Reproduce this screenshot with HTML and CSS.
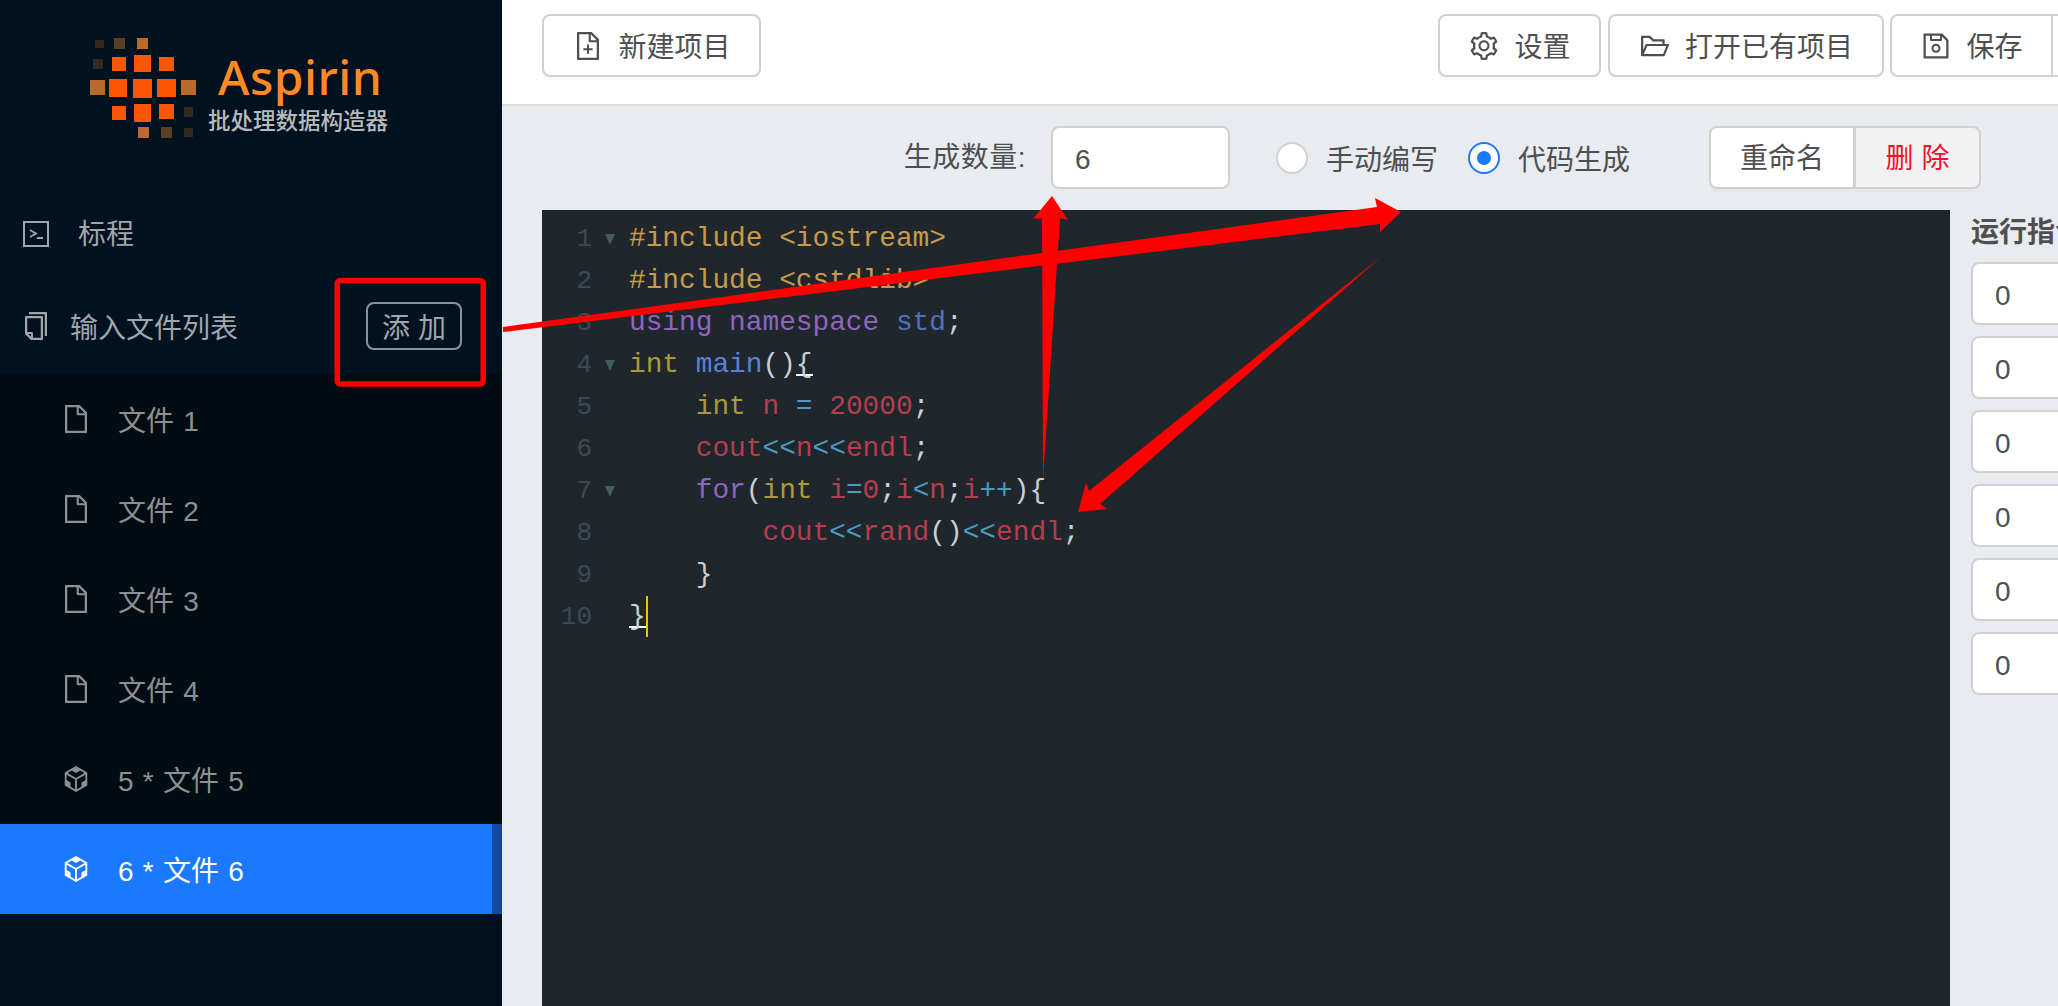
FILE: index.html
```html
<!DOCTYPE html>
<html lang="zh">
<head>
<meta charset="utf-8">
<title>Aspirin</title>
<link rel="stylesheet" href="styles.css">
</head>
<body>
<div class="app">
  <aside class="sidebar">
    <div class="logo">
      <svg class="logo-art" width="502" height="192" viewBox="0 0 502 192">
        <g class="sq-dark"><rect x="95" y="40" width="9" height="8"/><rect x="93" y="59" width="10" height="10"/><rect x="184" y="107" width="9" height="10"/><rect x="184" y="128" width="9" height="9"/></g>
        <g class="sq-mid"><rect x="114" y="38" width="11" height="11"/><rect x="161" y="127" width="11" height="11"/></g>
        <g class="sq-soft"><rect x="137" y="38" width="11" height="11"/><rect x="90" y="80" width="15" height="15"/><rect x="181" y="80" width="15" height="15"/><rect x="138" y="127" width="11" height="11"/></g>
        <g class="sq-hot"><rect x="112" y="57" width="14" height="14"/><rect x="134" y="55" width="17" height="17"/><rect x="159" y="57" width="15" height="14"/><rect x="109" y="79" width="18" height="18"/><rect x="133" y="79" width="19" height="19"/><rect x="157" y="79" width="19" height="18"/><rect x="112" y="106" width="14" height="14"/><rect x="134" y="104" width="17" height="18"/><rect x="159" y="104" width="15" height="15"/></g>
        <text class="logo-name" x="218" y="95">Aspirin</text>
        <text class="logo-sub" x="208" y="129">批处理数据构造器</text>
      </svg>
    </div>
    <nav class="menu">
      <div class="menu-item">
        <svg class="ico ico-term" viewBox="0 0 26 26"><rect x="1" y="1" width="24" height="24" fill="none" stroke="currentColor" stroke-width="2"/><path d="M7 9l6 3.5-6 3.5M14 17h6" fill="none" stroke="currentColor" stroke-width="1.8"/></svg>
        <span class="lift">标程</span>
      </div>
      <div class="menu-item menu-title">
        <svg class="ico ico-copy" viewBox="0 0 1024 1024"><path fill="currentColor" d="M832 64H296c-4.4 0-8 3.6-8 8v56c0 4.4 3.6 8 8 8h496v688c0 4.4 3.6 8 8 8h56c4.4 0 8-3.6 8-8V96c0-17.7-14.3-32-32-32zM704 192H192c-17.7 0-32 14.3-32 32v530.7c0 8.5 3.4 16.6 9.4 22.6l173.3 173.3c2.2 2.2 4.7 4 7.4 5.5v1.9h4.2c3.5 1.3 7.2 2 11 2H704c17.7 0 32-14.3 32-32V224c0-17.7-14.3-32-32-32zM350 856.2L263.9 770H350v86.2zM664 888H414V746c0-22.1-17.9-40-40-40H232V264h432v624z"/></svg>
        <span>输入文件列表</span>
        <button class="add-btn">添 加</button>
      </div>
      <div class="submenu">
        <div class="sub-item"><svg class="ico" viewBox="0 0 1024 1024"><path fill="currentColor" d="M854.6 288.6L639.4 73.4c-6-6-14.1-9.4-22.6-9.4H192c-17.7 0-32 14.3-32 32v832c0 17.7 14.3 32 32 32h640c17.7 0 32-14.3 32-32V311.3c0-8.5-3.4-16.7-9.4-22.7zM790.2 326H602V137.8L790.2 326zm1.8 562H232V136h302v216a42 42 0 0 0 42 42h216v494z"/></svg><span>文件 1</span></div>
        <div class="sub-item"><svg class="ico" viewBox="0 0 1024 1024"><path fill="currentColor" d="M854.6 288.6L639.4 73.4c-6-6-14.1-9.4-22.6-9.4H192c-17.7 0-32 14.3-32 32v832c0 17.7 14.3 32 32 32h640c17.7 0 32-14.3 32-32V311.3c0-8.5-3.4-16.7-9.4-22.7zM790.2 326H602V137.8L790.2 326zm1.8 562H232V136h302v216a42 42 0 0 0 42 42h216v494z"/></svg><span>文件 2</span></div>
        <div class="sub-item"><svg class="ico" viewBox="0 0 1024 1024"><path fill="currentColor" d="M854.6 288.6L639.4 73.4c-6-6-14.1-9.4-22.6-9.4H192c-17.7 0-32 14.3-32 32v832c0 17.7 14.3 32 32 32h640c17.7 0 32-14.3 32-32V311.3c0-8.5-3.4-16.7-9.4-22.7zM790.2 326H602V137.8L790.2 326zm1.8 562H232V136h302v216a42 42 0 0 0 42 42h216v494z"/></svg><span>文件 3</span></div>
        <div class="sub-item"><svg class="ico" viewBox="0 0 1024 1024"><path fill="currentColor" d="M854.6 288.6L639.4 73.4c-6-6-14.1-9.4-22.6-9.4H192c-17.7 0-32 14.3-32 32v832c0 17.7 14.3 32 32 32h640c17.7 0 32-14.3 32-32V311.3c0-8.5-3.4-16.7-9.4-22.7zM790.2 326H602V137.8L790.2 326zm1.8 562H232V136h302v216a42 42 0 0 0 42 42h216v494z"/></svg><span>文件 4</span></div>
        <div class="sub-item"><svg class="ico" viewBox="0 0 1024 1024"><path fill="currentColor" d="M709.6 210l.4-.2h.2L512 96 313.9 209.8h-.2l.7.3L151.5 304v416L512 928l360.5-208V304l-162.9-94zM482.7 843.6L339.6 761V621.4L210 547.8V372.9l272.7 157.3v313.4zM238.2 321.5l134.7-77.8 138.9 79.7 139.1-79.9 135.2 78-273.9 158-274-158zM814 548.3l-128.8 73.1v139.1l-143.9 83V530.4L814 373.1v175.2z"/></svg><span>5 * 文件 5</span></div>
        <div class="sub-item active"><svg class="ico" viewBox="0 0 1024 1024"><path fill="currentColor" d="M709.6 210l.4-.2h.2L512 96 313.9 209.8h-.2l.7.3L151.5 304v416L512 928l360.5-208V304l-162.9-94zM482.7 843.6L339.6 761V621.4L210 547.8V372.9l272.7 157.3v313.4zM238.2 321.5l134.7-77.8 138.9 79.7 139.1-79.9 135.2 78-273.9 158-274-158zM814 548.3l-128.8 73.1v139.1l-143.9 83V530.4L814 373.1v175.2z"/></svg><span>6 * 文件 6</span></div>
      </div>
    </nav>
  </aside>

  <main class="main">
    <header class="toolbar">
      <button class="btn btn-new"><svg class="btn-ico" viewBox="0 0 1024 1024"><path fill="currentColor" d="M854.6 288.6L639.4 73.4c-6-6-14.1-9.4-22.6-9.4H192c-17.7 0-32 14.3-32 32v832c0 17.7 14.3 32 32 32h640c17.7 0 32-14.3 32-32V311.3c0-8.5-3.4-16.7-9.4-22.7zM790.2 326H602V137.8L790.2 326zm1.8 562H232V136h302v216a42 42 0 0 0 42 42h216v494z"/><path fill="currentColor" d="M544 472c0-4.4-3.6-8-8-8h-48c-4.4 0-8 3.6-8 8v108H372c-4.4 0-8 3.6-8 8v48c0 4.4 3.6 8 8 8h108v108c0 4.4 3.6 8 8 8h48c4.4 0 8-3.6 8-8V644h108c4.4 0 8-3.6 8-8v-48c0-4.4-3.6-8-8-8H544V472z"/></svg><span class="lift-sm">新建项目</span></button>
      <div class="toolbar-right">
        <button class="btn btn-set"><svg class="btn-ico" viewBox="0 0 1024 1024"><path fill="currentColor" d="M924.8 625.7l-65.5-56c3.1-19 4.7-38.4 4.7-57.8s-1.6-38.8-4.7-57.8l65.5-56a32.03 32.03 0 0 0 9.3-35.2l-.9-2.6a443.74 443.74 0 0 0-79.7-137.9l-1.8-2.1a32.12 32.12 0 0 0-35.1-9.5l-81.3 28.9c-30-24.6-63.5-44-99.7-57.6l-15.7-85a32.05 32.05 0 0 0-25.8-25.7l-2.7-.5c-52.1-9.4-106.9-9.4-159 0l-2.7.5a32.05 32.05 0 0 0-25.8 25.7l-15.8 85.4a351.86 351.86 0 0 0-99 57.4l-81.9-29.1a32 32 0 0 0-35.1 9.5l-1.8 2.1a446.02 446.02 0 0 0-79.7 137.9l-.9 2.6c-4.5 12.5-.8 26.5 9.3 35.2l66.3 56.6c-3.1 18.8-4.6 38-4.6 57.1 0 19.2 1.5 38.4 4.6 57.1L99 625.5a32.03 32.03 0 0 0-9.3 35.2l.9 2.6c18.1 50.4 44.9 96.9 79.7 137.9l1.8 2.1a32.12 32.12 0 0 0 35.1 9.5l81.9-29.1c29.8 24.5 63.1 43.9 99 57.4l15.8 85.4a32.05 32.05 0 0 0 25.8 25.7l2.7.5a449.4 449.4 0 0 0 159 0l2.7-.5a32.05 32.05 0 0 0 25.8-25.7l15.7-85a350 350 0 0 0 99.7-57.6l81.3 28.9a32 32 0 0 0 35.1-9.5l1.8-2.1c34.8-41.1 61.6-87.5 79.7-137.9l.9-2.6c4.5-12.3.8-26.3-9.3-35zM788.3 465.9c2.5 15.1 3.8 30.6 3.8 46.1s-1.3 31-3.8 46.1l-6.6 40.1 74.7 63.9a370.03 370.03 0 0 1-42.6 73.6L721 702.8l-31.4 25.8c-23.9 19.6-50.5 35-79.3 45.8l-38.1 14.3-17.9 97a377.5 377.5 0 0 1-85 0l-17.9-97.2-37.8-14.5c-28.5-10.8-55-26.2-78.7-45.7l-31.4-25.9-93.4 33.2c-17-22.9-31.2-47.6-42.6-73.6l75.5-64.5-6.5-40c-2.4-14.9-3.7-30.3-3.7-45.5 0-15.3 1.2-30.6 3.7-45.5l6.5-40-75.5-64.5c11.3-26.1 25.6-50.7 42.6-73.6l93.4 33.2 31.4-25.9c23.7-19.5 50.2-34.9 78.7-45.7l37.9-14.3 17.9-97.2c28.1-3.2 56.8-3.2 85 0l17.9 97 38.1 14.3c28.7 10.8 55.4 26.2 79.3 45.8l31.4 25.8 92.8-32.9c17 22.9 31.2 47.6 42.6 73.6L781.8 426l6.5 39.9zM512 326c-97.2 0-176 78.8-176 176s78.8 176 176 176 176-78.8 176-176-78.8-176-176-176zm79.2 255.2A111.6 111.6 0 0 1 512 614c-29.9 0-58-11.7-79.2-32.8A111.6 111.6 0 0 1 400 502c0-29.9 11.7-58 32.8-79.2C454 401.6 482.1 390 512 390c29.9 0 58 11.6 79.2 32.8A111.6 111.6 0 0 1 624 502c0 29.9-11.7 58-32.8 79.2z"/></svg><span class="lift-sm">设置</span></button>
        <button class="btn btn-open"><svg class="btn-ico" viewBox="0 0 1024 1024"><path fill="currentColor" d="M928 444H820V330.4c0-17.7-14.3-32-32-32H473L355.7 186.2a8.15 8.15 0 0 0-5.5-2.2H96c-17.7 0-32 14.3-32 32v592c0 17.7 14.3 32 32 32h698c13 0 24.8-7.9 29.7-20l134-332c1.5-3.8 2.3-7.9 2.3-12 0-17.7-14.3-32-32-32zM136 256h188.5l119.6 114.4H748V444H238c-13 0-24.8 7.9-29.7 20L136 643.2V256zm635.3 512H159l103.3-256h612.4L771.3 768z"/></svg><span class="lift-sm">打开已有项目</span></button>
        <div class="btn-group">
          <button class="btn btn-save"><svg class="btn-ico" viewBox="0 0 1024 1024"><path fill="currentColor" d="M893.3 293.3L730.7 130.7c-7.5-7.5-16.7-13-26.7-16V112H144c-17.7 0-32 14.3-32 32v736c0 17.7 14.3 32 32 32h736c17.7 0 32-14.3 32-32V338.5c0-17-6.7-33.2-18.7-45.2zM384 184h256v104H384V184zm456 656H184V184h136v136c0 17.7 14.3 32 32 32h320c17.7 0 32-14.3 32-32V205.8l136 136V840zM512 442c-79.5 0-144 64.5-144 144s64.5 144 144 144 144-64.5 144-144-64.5-144-144-144zm0 224c-44.2 0-80-35.8-80-80s35.8-80 80-80 80 35.8 80 80-35.8 80-80 80z"/></svg><span class="lift-sm">保存</span></button>
          <div class="btn-cut"></div>
        </div>
      </div>
    </header>

    <section class="options">
      <label class="count-label">生成数量:</label>
      <div class="field field-count">6</div>
      <div class="radios">
        <span class="radio"><i class="radio-dot"></i>手动编写</span>
        <span class="radio checked"><i class="radio-dot"></i>代码生成</span>
      </div>
      <div class="seg">
        <button class="seg-btn">重命名</button>
        <button class="seg-btn seg-del">删 除</button>
      </div>
    </section>

    <section class="work">
      <div class="editor">
        <div class="line"><span class="ln">1</span><span class="fold on"></span><code><span class="inc">#include &lt;iostream&gt;</span></code></div>
        <div class="line"><span class="ln">2</span><span class="fold"></span><code><span class="inc">#include &lt;cstdlib&gt;</span></code></div>
        <div class="line"><span class="ln">3</span><span class="fold"></span><code><span class="kw">using namespace</span> <span class="ns">std</span><span class="pn">;</span></code></div>
        <div class="line"><span class="ln">4</span><span class="fold on"></span><code><span class="ty">int</span> <span class="fn">main</span><span class="pn">()</span><span class="pn match">{</span></code></div>
        <div class="line"><span class="ln">5</span><span class="fold"></span><code>    <span class="ty">int</span> <span class="id">n</span> <span class="op">=</span> <span class="id">20000</span><span class="pn">;</span></code></div>
        <div class="line"><span class="ln">6</span><span class="fold"></span><code>    <span class="id">cout</span><span class="op">&lt;&lt;</span><span class="id">n</span><span class="op">&lt;&lt;</span><span class="id">endl</span><span class="pn">;</span></code></div>
        <div class="line"><span class="ln">7</span><span class="fold on"></span><code>    <span class="kw">for</span><span class="pn">(</span><span class="ty">int</span> <span class="id">i</span><span class="op">=</span><span class="id">0</span><span class="pn">;</span><span class="id">i</span><span class="op">&lt;</span><span class="id">n</span><span class="pn">;</span><span class="id">i</span><span class="op">++</span><span class="pn">){</span></code></div>
        <div class="line"><span class="ln">8</span><span class="fold"></span><code>        <span class="id">cout</span><span class="op">&lt;&lt;</span><span class="id">rand</span><span class="pn">()</span><span class="op">&lt;&lt;</span><span class="id">endl</span><span class="pn">;</span></code></div>
        <div class="line"><span class="ln">9</span><span class="fold"></span><code>    <span class="pn">}</span></code></div>
        <div class="line"><span class="ln">10</span><span class="fold"></span><code><span class="pn match caret">}</span></code></div>
      </div>
      <aside class="cmds">
        <div class="cmds-title">运行指令</div>
        <div class="field">0</div>
        <div class="field">0</div>
        <div class="field">0</div>
        <div class="field">0</div>
        <div class="field">0</div>
        <div class="field">0</div>
      </aside>
    </section>
  </main>
</div>

<svg class="annot" width="2058" height="1006" viewBox="0 0 2058 1006">
  <rect class="annot-box" x="337.2" y="280.5" width="146" height="103.5" rx="3"/>
  <polygon class="annot-arrow" points="503,327 1377,207 1375,198 1401,212 1380,232 1380,224 503,332"/>
  <polygon class="annot-arrow" points="1043,480 1042,218 1033,219 1052,196 1068,220 1060,218"/>
  <polygon class="annot-arrow" points="1382,256 1100,504 1107,509 1078,512 1086,483 1089,491"/>
</svg>
</body>
</html>
```
FILE: styles.css
```css
* { box-sizing: border-box; }
html, body { margin: 0; height: 100%; overflow: hidden; }
body {
  font-family: "Liberation Sans", "Noto Sans CJK SC", sans-serif;
  font-size: 28px;
  color: #4f4f4f;
  background: #e8ebf0;
}
.app { display: flex; width: 2058px; height: 1006px; overflow: hidden; }
.lift { padding-bottom: 4px; }
.lift-sm { padding-bottom: 2px; }

/* sidebar */
.sidebar { flex: none; width: 502px; background: #00111f; color: #a0a6ac; }
.logo { height: 192px; }
.logo-art { display: block; }
.sq-dark { fill: #33291f; }
.sq-mid { fill: #5a4126; }
.sq-soft { fill: #b96a2c; }
.sq-hot { fill: #ff5500; }
.logo-name { font-family: "Noto Sans", sans-serif; font-size: 48px; font-weight: 500; fill: #ff8a25; letter-spacing: 0.5px; }
.logo-sub { font-family: "Noto Sans CJK SC", sans-serif; font-size: 22.5px; font-weight: 500; fill: #b6babd; }

.menu-item { display: flex; align-items: center; height: 84px; padding-left: 23px; gap: 29px; }
.menu-title { margin-top: 8px; margin-bottom: 6px; padding-left: 20px; gap: 18px; }
.ico { flex: none; width: 32px; height: 32px; }
.ico-term { width: 26px; height: 26px; }
.add-btn {
  margin-left: auto;
  margin-right: 40px;
  width: 96px;
  height: 48px;
  padding: 0;
  font: inherit;
  color: #a0a6ac;
  background: transparent;
  border: 2px solid #8a9299;
  border-radius: 8px;
}
.submenu { background: #020c12; }
.sub-item { display: flex; align-items: center; height: 90px; padding-left: 60px; gap: 26px; color: #8b9094; word-spacing: 1.5px; }
.sub-item.active { background: #1a79ff; color: #fff; border-right: 10px solid #14489e; }

/* main */
.main { flex: none; width: 1556px; display: flex; flex-direction: column; }
.toolbar {
  flex: none;
  height: 106px;
  padding: 14px 0 0 40px;
  background: #fff;
  border-bottom: 2px solid #dcdee1;
  display: flex;
  justify-content: space-between;
  align-items: flex-start;
}
.toolbar-right { display: flex; gap: 6px; }
.btn-group { display: flex; }
.btn {
  display: flex;
  align-items: center;
  justify-content: center;
  height: 63px;
  padding: 0;
  font: inherit;
  color: #4f4f4f;
  background: #fff;
  border: 2px solid #d0d0d0;
  border-radius: 8px;
  box-shadow: 0 3px 0 rgba(0, 0, 0, .02);
  gap: 14px;
}
.btn-ico { width: 32px; height: 32px; flex: none; }
.btn-new { width: 219px; }
.btn-set { width: 163px; margin-right: 1px; }
.btn-open { width: 276px; }
.btn-save { width: 163px; border-radius: 8px 0 0 8px; }
.btn-cut { width: 5px; height: 63px; background: #fff; border: 2px solid #d0d0d0; border-width: 2px 0; }

.options {
  flex: none;
  height: 104px;
  padding: 20px 77px 0 0;
  display: flex;
  justify-content: flex-end;
  align-items: flex-start;
}
.count-label { line-height: 64px; margin-right: 25px; letter-spacing: .5px; }
.field {
  height: 63px;
  line-height: 64px;
  padding-left: 22px;
  background: #fff;
  border: 2px solid #d0d0d0;
  border-radius: 8px;
}
.field-count { width: 179px; }
.radios { display: flex; gap: 30px; margin-left: 46px; height: 63px; }
.radio { display: flex; align-items: center; gap: 18px; padding-top: 1px; }
.radio-dot {
  width: 32px;
  height: 32px;
  flex: none;
  background: #fff;
  border: 2px solid #d0d0d0;
  border-radius: 50%;
  display: flex;
  align-items: center;
  justify-content: center;
}
.checked .radio-dot { border-color: #1a79ff; }
.checked .radio-dot::after { content: ""; width: 14px; height: 14px; border-radius: 50%; background: #1a79ff; }
.seg { display: flex; margin-left: 79px; }
.seg-btn {
  height: 63px;
  padding: 0 0 4px;
  font: inherit;
  color: #4f4f4f;
  background: #fff;
  border: 2px solid #d0d0d0;
  border-radius: 8px 0 0 8px;
  width: 146px;
  box-shadow: 0 3px 0 rgba(0, 0, 0, .02);
}
.seg-del {
  width: 127px;
  margin-left: -1px;
  color: #f5102d;
  background: #f2f2f2;
  border-radius: 0 8px 8px 0;
}

.work { flex: 1; min-height: 0; display: flex; padding-left: 40px; gap: 21px; }
.editor {
  flex: none;
  width: 1408px;
  padding-top: 8px;
  background: #1f272d;
  font-family: "Liberation Mono", monospace;
  font-size: 27.8px;
}
.line { display: flex; height: 42px; line-height: 42px; }
.ln { flex: none; width: 50px; text-align: right; font-size: 26px; color: #3b4a54; }
.fold { flex: none; width: 37px; display: flex; align-items: center; justify-content: center; padding-right: 2px; }
.fold.on::before {
  content: "";
  border-left: 5.5px solid transparent;
  border-right: 5.5px solid transparent;
  border-top: 11px solid #465a64;
}
code { font: inherit; white-space: pre; }
.inc { color: #c99a4a; }
.kw { color: #8f65bd; }
.ns { color: #5370bd; }
.ty { color: #ad993a; }
.fn { color: #5a82d6; }
.id { color: #b53e4e; }
.op { color: #4a9cc0; }
.pn { color: #c8d0d6; }
.match { position: relative; display: inline-block; height: 32px; line-height: 42px; border-bottom: 2px solid #fff; vertical-align: top; }
.caret::after { content: ""; position: absolute; left: 100%; top: 0; width: 2px; height: 41px; background: #ffbb00; }

.cmds { flex: none; width: 220px; }
.cmds-title { height: 52px; padding-top: 1px; font-weight: 700; line-height: 44px; }
.cmds .field { margin-bottom: 11px; }

/* annotations drawn over the screenshot */
.annot { position: absolute; left: 0; top: 0; pointer-events: none; }
.annot-box { fill: none; stroke: #ff0000; stroke-width: 5.5; }
.annot-arrow { fill: #ff0000; }
```
